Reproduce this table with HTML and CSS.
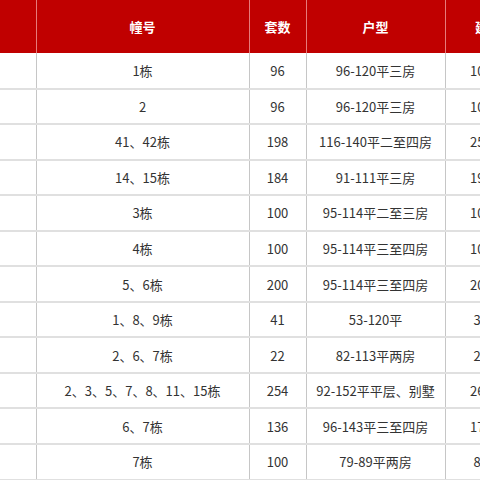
FILE: index.html
```html
<!DOCTYPE html>
<html lang="zh">
<head>
<meta charset="utf-8">
<link rel="stylesheet" href="styles.css">
</head>
<body>
<div class="frame">
<table class="grid">
  <colgroup>
    <col class="c-name"><col class="c-bld"><col class="c-num"><col class="c-type"><col class="c-area">
  </colgroup>
  <thead>
    <tr><th></th><th>幢号</th><th>套数</th><th>户型</th><th>建面</th></tr>
  </thead>
  <tbody>
    <tr><td></td><td>1栋</td><td>96</td><td>96-120平三房</td><td>10368</td></tr>
    <tr><td></td><td>2</td><td>96</td><td>96-120平三房</td><td>10368</td></tr>
    <tr><td></td><td>41、42栋</td><td>198</td><td>116-140平二至四房</td><td>25344</td></tr>
    <tr><td></td><td>14、15栋</td><td>184</td><td>91-111平三房</td><td>19320</td></tr>
    <tr><td></td><td>3栋</td><td>100</td><td>95-114平二至三房</td><td>10450</td></tr>
    <tr><td></td><td>4栋</td><td>100</td><td>95-114平三至四房</td><td>10450</td></tr>
    <tr><td></td><td>5、6栋</td><td>200</td><td>95-114平三至四房</td><td>20900</td></tr>
    <tr><td></td><td>1、8、9栋</td><td>41</td><td>53-120平</td><td>3547</td></tr>
    <tr><td></td><td>2、6、7栋</td><td>22</td><td>82-113平两房</td><td>2145</td></tr>
    <tr><td></td><td>2、3、5、7、8、11、15栋</td><td>254</td><td>92-152平平层、别墅</td><td>26670</td></tr>
    <tr><td></td><td>6、7栋</td><td>136</td><td>96-143平三至四房</td><td>17000</td></tr>
    <tr><td></td><td>7栋</td><td>100</td><td>79-89平两房</td><td>8400</td></tr>
  </tbody>
</table>
</div>
</body>
</html>
```
FILE: styles.css
```css
html, body {
  margin: 0;
  padding: 0;
  background: #ffffff;
}
.frame {
  width: 480px;
  height: 480px;
  overflow: hidden;
}
.grid {
  border-collapse: collapse;
  table-layout: fixed;
  width: 531px;
  font-family: "Noto Sans CJK SC", "Noto Sans", sans-serif;
  font-size: 13px;
  color: #333333;
}
.c-name { width: 36px; }
.c-bld { width: 213px; }
.c-num { width: 57px; }
.c-type { width: 139px; }
.c-area { width: 86px; }
.grid th {
  height: 53px;
  padding: 0;
  background: #c00000;
  color: #ffffff;
  font-weight: bold;
  font-size: 13px;
  text-align: center;
  border-left: 1px solid #e67a7a;
  border-right: 1px solid #e67a7a;
  white-space: nowrap;
}
.grid th:first-child { border-left: none; }
.grid tbody tr { height: 35.55px; }
.grid td {
  padding: 0;
  text-align: center;
  white-space: nowrap;
  border-left: 1px solid #c6c6c6;
  border-right: 1px solid #c6c6c6;
  border-bottom: 2px solid #e0e0e0;
}
.grid td:first-child { border-left: none; }
```
